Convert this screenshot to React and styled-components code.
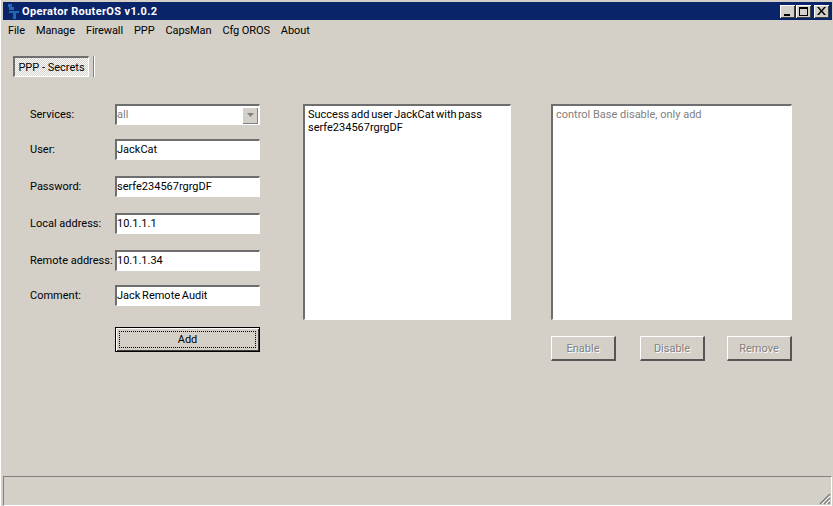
import React from 'react';
import styled, { createGlobalStyle } from 'styled-components';

const GlobalStyle = createGlobalStyle`
  html, body {
    margin: 0;
    padding: 0;
    background: #d4d0c8;
  }
`;

const Window = styled.div`
  width: 833px;
  height: 506px;
  box-sizing: border-box;
  padding: 2px 1px 0 2px;
  background: #d4d0c8;
  display: flex;
  flex-direction: column;
  font-family: Roboto, Tahoma, sans-serif;
  font-size: 11px;
  color: #000;
  overflow: hidden;
  border-left: 1px solid #fff;
`;

const TitleBar = styled.div`
  height: 18px;
  flex: none;
  background: #0a246a;
  display: flex;
  align-items: center;
  padding: 0 3px 0 3px;
  color: #fff;
  font-weight: 700;
  font-size: 11px;
`;

const TitleText = styled.span`
  margin-left: 2px;
  flex: 1;
  letter-spacing: 0.35px;
`;

const CaptionButton = styled.div`
  width: 15px;
  height: 13px;
  margin-left: ${p => p.$gap || 0}px;
  background: #d4d0c8;
  box-shadow: inset 1px 1px 0 #fff, inset -1px -1px 0 #404040;
  display: flex;
  align-items: center;
  justify-content: center;
`;

const MenuBar = styled.div`
  height: 20px;
  flex: none;
  display: flex;
  align-items: center;
  gap: 11px;
  padding-left: 5px;
  font-size: 11px;
  letter-spacing: -0.1px;
`;

const TabStrip = styled.div`
  margin: 16px 0 0 10px;
  height: 21px;
  display: flex;
  align-items: stretch;
`;

const Tab = styled.div`
  width: 76px;
  height: 21px;
  box-sizing: border-box;
  border-top: 2px solid #6e6e6e;
  border-left: 2px solid #6e6e6e;
  border-right: 1px solid #fff;
  border-bottom: 1px solid #fff;
  background: repeating-conic-gradient(#fff 0 25%, #d4d0c8 0 50%) 0 0 / 2px 2px;
  display: flex;
  align-items: center;
  justify-content: center;
  font-size: 11px;
`;

const TabDivider = styled.div`
  width: 2px;
  height: 21px;
  margin-left: 4px;
  background: linear-gradient(to right, #808080 1px, #fff 1px);
`;

const Content = styled.div`
  flex: 1;
  display: flex;
  align-items: flex-start;
  padding: 27px 0 0 0;
`;

const FormColumn = styled.div`
  width: 256px;
  margin-left: 27px;
  flex: none;
  display: grid;
  grid-template-columns: 85px 145px;
  grid-template-rows: 35px 37px 37px 37px 35px 42px 25px;
  align-items: start;
`;

const Label = styled.label`
  font-size: 11px;
  line-height: 22px;
  white-space: nowrap;
`;

const Sunken = styled.div`
  box-sizing: border-box;
  border-top: 2px solid #6e6e6e;
  border-left: 2px solid #6e6e6e;
  border-right: 1px solid #fff;
  border-bottom: 1px solid #fff;
  background: #fff;
`;

const Input = styled(Sunken)`
  height: 21px;
  width: 145px;
  padding-bottom: 2px;
  display: flex;
  align-items: center;
  font-size: 11px;
  word-spacing: -1px;
`;

const ComboText = styled.span`
  flex: 1;
  color: #808080;
`;

const ComboArrow = styled.div`
  width: 16px;
  height: 17px;
  margin: 2px 1px 0 0;
  background: #d4d0c8;
  box-shadow: inset 1px 1px 0 #fff, inset -1px -1px 0 #808080;
  display: flex;
  align-items: center;
  justify-content: center;
`;

const AddButton = styled.div`
  grid-column: 2;
  height: 25px;
  width: 145px;
  box-sizing: border-box;
  border: 1px solid #000;
  background: #d4d0c8;
  box-shadow: inset 1px 1px 0 #fff, inset -1px -1px 0 #404040;
  display: flex;
  align-items: center;
  justify-content: center;
  padding: 3px;
`;

const FocusRing = styled.div`
  width: 100%;
  height: 100%;
  outline: 1px dotted #000;
  outline-offset: -1px;
  display: flex;
  align-items: center;
  justify-content: center;
`;

const MemoBox = styled(Sunken)`
  height: 216px;
  width: ${p => p.$width}px;
  padding: 2px 3px;
  font-size: 11px;
  line-height: 13px;
  color: ${p => (p.$muted ? '#808080' : '#000')};
  word-spacing: ${p => (p.$muted ? 0 : -1)}px;
`;

const LogColumn = styled.div`
  margin-left: 17px;
  flex: none;
`;

const ControlColumn = styled.div`
  margin-left: 40px;
  flex: none;
  width: 241px;
`;

const ButtonRow = styled.div`
  margin-top: 16px;
  display: flex;
`;

const DisabledButton = styled.div`
  width: 65px;
  height: 25px;
  margin-left: ${p => p.$gap || 0}px;
  box-sizing: border-box;
  border-top: 1px solid #fff;
  border-left: 1px solid #fff;
  border-right: 2px solid #555;
  border-bottom: 2px solid #555;
  display: flex;
  align-items: center;
  justify-content: center;
  color: #808080;
  text-shadow: 1px 1px 0 #fff;
  font-size: 11px;
`;

const StatusBar = styled.div`
  height: 30px;
  flex: none;
  box-sizing: border-box;
  border-top: 1px solid #808080;
  border-left: 1px solid #808080;
  border-right: 1px solid #fff;
  border-bottom: 1px solid #fff;
  display: flex;
  justify-content: flex-end;
  align-items: flex-end;
`;

const TitleIcon = () => (
  <svg width="14" height="15" viewBox="0 0 14 15">
    <path d="M2 0h4v3H2zM3 3h5v3H3z" fill="#2468b4" />
    <path d="M3 7h10v2H10v6H7V9H3z" fill="#2468b4" />
  </svg>
);

const MinIcon = () => (
  <svg width="9" height="9" viewBox="0 0 9 9"><rect x="1" y="7" width="6" height="2" fill="#000" /></svg>
);

const MaxIcon = () => (
  <svg width="9" height="9" viewBox="0 0 9 9">
    <path d="M0 0h9v9H0z M1 2v6h7V2z" fill="#000" fillRule="evenodd" />
  </svg>
);

const CloseIcon = () => (
  <svg width="9" height="8" viewBox="0 0 9 8">
    <path d="M0 0h2l2.500 3L7 0h2L5.500 4 9 8H7L4.500 5 2 8H0l3.500-4z" fill="#000" />
  </svg>
);

const ArrowIcon = () => (
  <svg width="7" height="4" viewBox="0 0 7 4"><path d="M0 0h7L3.500 4z" fill="#808080" /></svg>
);

const GripIcon = () => (
  <svg width="12" height="12" viewBox="0 0 12 12">
    <path d="M11 1 1 11M11 5 5 11M11 9 9 11" stroke="#808080" strokeWidth="1.500" />
    <path d="M11 3 3 11M11 7 7 11" stroke="#fff" strokeWidth="1" />
  </svg>
);

const menuItems = ['File', 'Manage', 'Firewall', 'PPP', 'CapsMan', 'Cfg OROS', 'About'];

const fields = [
  ['User:', 'JackCat'],
  ['Password:', 'serfe234567rgrgDF'],
  ['Local address:', '10.1.1.1'],
  ['Remote address:', '10.1.1.34'],
  ['Comment:', 'Jack Remote Audit'],
];

export default function App() {
  return (
    <Window>
      <GlobalStyle />
      <TitleBar>
        <TitleIcon />
        <TitleText>Operator RouterOS v1.0.2</TitleText>
        <CaptionButton><MinIcon /></CaptionButton>
        <CaptionButton $gap={1}><MaxIcon /></CaptionButton>
        <CaptionButton $gap={3}><CloseIcon /></CaptionButton>
      </TitleBar>
      <MenuBar>
        {menuItems.map(item => <span key={item}>{item}</span>)}
      </MenuBar>
      <TabStrip>
        <Tab>PPP - Secrets</Tab>
        <TabDivider />
      </TabStrip>
      <Content>
        <FormColumn>
          <Label>Services:</Label>
          <Input>
            <ComboText>all</ComboText>
            <ComboArrow><ArrowIcon /></ComboArrow>
          </Input>
          {fields.map(([label, value]) => (
            <React.Fragment key={label}>
              <Label>{label}</Label>
              <Input>{value}</Input>
            </React.Fragment>
          ))}
          <AddButton><FocusRing>Add</FocusRing></AddButton>
        </FormColumn>
        <LogColumn>
          <MemoBox $width={208}>Success add user JackCat with pass serfe234567rgrgDF</MemoBox>
        </LogColumn>
        <ControlColumn>
          <MemoBox $width={241} $muted>control Base disable, only add</MemoBox>
          <ButtonRow>
            <DisabledButton>Enable</DisabledButton>
            <DisabledButton $gap={24}>Disable</DisabledButton>
            <DisabledButton $gap={22}>Remove</DisabledButton>
          </ButtonRow>
        </ControlColumn>
      </Content>
      <StatusBar><GripIcon /></StatusBar>
    </Window>
  );
}
